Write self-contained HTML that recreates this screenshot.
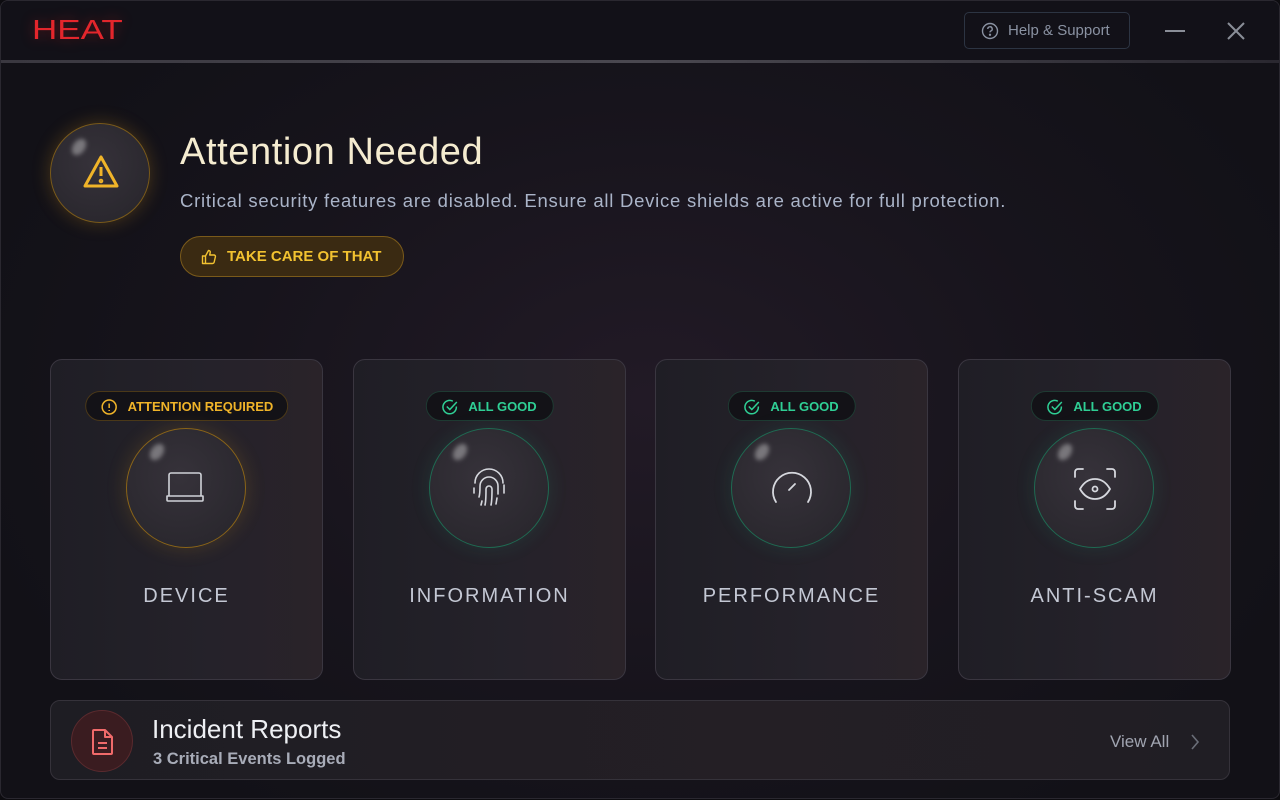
<!DOCTYPE html>
<html><head><meta charset="utf-8"><style>
*{margin:0;padding:0;box-sizing:border-box}
body{width:1280px;height:800px;overflow:hidden;background:#0d0c10;font-family:"Liberation Sans",sans-serif}
.win{position:absolute;left:0;top:0;width:1280px;height:799px;border-radius:8px;background:radial-gradient(ellipse 700px 500px at 650px 400px,#221a26 0%,#17141c 60%,#121117 100%);border:1px solid #2a2830;overflow:hidden}
.hdr{position:absolute;left:0;top:0;width:100%;height:60px;background:#121118}
.sep{position:absolute;left:0;top:59px;width:100%;height:3px;background:linear-gradient(90deg,#3a3840,#4a4850 50%,#2a2830)}
.logo{position:absolute;left:31px;top:13px;color:#e3262c;font-size:28px;font-weight:400;transform:scaleX(1.25);transform-origin:left;text-shadow:0 0 12px rgba(220,30,30,.4)}
.help{position:absolute;left:963px;top:11px;width:166px;height:37px;border:1px solid #2c3442;border-radius:5px;color:#8a92a2;font-size:15px;line-height:36px;padding-left:43px}
.help svg{position:absolute;left:16px;top:9px}
.txt{position:absolute;color:#f5ecd0}
.circ{position:absolute;border-radius:50%;background:radial-gradient(circle at 45% 40%,#36323a,#26242a)}
.shine{position:absolute;width:12px;height:18px;border-radius:50%;background:rgba(255,255,255,.35);filter:blur(2px);transform:rotate(35deg)}
.card{position:absolute;top:358px;width:273px;height:321px;border:1px solid #3a3640;border-radius:12px;background:linear-gradient(90deg,#1f1e25,#25222a 60%,#2a2329)}
.badge{position:absolute;top:31px;height:30px;border-radius:15px;background:#131217;font-weight:bold;font-size:13px;line-height:29px;left:50%;transform:translateX(-50%);white-space:nowrap}
.label{position:absolute;top:225px;width:100%;text-align:center;color:#c4c8d4;font-size:20px;letter-spacing:2px}
.big{left:75px;top:68px;width:120px;height:120px}
</style></head><body>
<div class="win">
<div class="hdr"></div><div class="sep"></div>
<div class="logo">HEAT</div>
<div class="help"><svg width="18" height="18" viewBox="0 0 18 18" fill="none" stroke="#8a92a2" stroke-width="1.4"><circle cx="9" cy="9" r="7.5"/><path d="M6.8 7a2.2 2.2 0 1 1 3 2c-.6.3-.8.7-.8 1.4"/><circle cx="9" cy="12.8" r=".5" fill="#8a92a2"/></svg>Help &amp; Support</div>
<div style="position:absolute;left:1164px;top:29px;width:20px;height:2px;background:#8a8e98"></div>
<svg style="position:absolute;left:1226px;top:21px" width="18" height="18" stroke="#8a8e98" stroke-width="2"><path d="M1 1L17 17M17 1L1 17"/></svg>

<div class="circ" style="left:49px;top:122px;width:100px;height:100px;border:1px solid #7a5a1a;box-shadow:0 0 18px rgba(230,160,30,.25)"><div class="shine" style="left:22px;top:14px"></div>
<svg style="position:absolute;left:31px;top:30px" width="38" height="36" viewBox="0 0 38 36" fill="none" stroke="#f0b429" stroke-width="3" stroke-linejoin="round"><path d="M19 3L35 32H3Z"/><path d="M19 13v9"/><circle cx="19" cy="27" r=".8" fill="#f0b429"/></svg></div>
<div class="txt" style="left:179px;top:130px;font-size:38px;letter-spacing:0.6px">Attention Needed</div>
<div class="txt" style="left:179px;top:189px;font-size:18.5px;letter-spacing:0.75px;color:#aab4c8">Critical security features are disabled. Ensure all Device shields are active for full protection.</div>
<div style="position:absolute;left:179px;top:235px;width:224px;height:41px;border-radius:21px;border:1px solid #7a5a1a;background:#3a2a12;color:#f2c230;font-weight:bold;font-size:15px;line-height:40px;padding-left:46px">TAKE CARE OF THAT
<svg style="position:absolute;left:20px;top:12px" width="16" height="16" viewBox="0 0 16 16" fill="none" stroke="#f2c230" stroke-width="1.4" stroke-linejoin="round"><path d="M1.5 7h3v7.5h-3zM4.5 7l3-5.5c1.2 0 2 .8 1.7 2L8.7 6h4.3c1 0 1.6.9 1.4 1.8l-1.2 5.2c-.2.9-.9 1.5-1.8 1.5H4.5"/></svg></div>

<div class="card" style="left:49px">
<div class="badge" style="border:1px solid #4a3818;color:#f0b429;padding:0 14px 0 42px">ATTENTION REQUIRED<svg style="position:absolute;left:15px;top:7px" width="16" height="16" fill="none" stroke="#f0b429" stroke-width="1.5"><circle cx="8" cy="8" r="7"/><path d="M8 4.5v4.5M8 11v1"/></svg></div>
<div class="circ big" style="border:1px solid #8a6418;box-shadow:0 0 20px rgba(230,160,30,.18)"><div class="shine" style="left:24px;top:14px"></div>
<svg style="position:absolute;left:38px;top:42px" width="42" height="36" fill="none" stroke="#d0d2d8" stroke-width="1.6" stroke-linejoin="round"><path d="M4 25V4a2 2 0 0 1 2-2h28a2 2 0 0 1 2 2v21M2 25h36v4a1 1 0 0 1-1 1H3a1 1 0 0 1-1-1z"/></svg></div>
<div class="label">DEVICE</div></div>

<div class="card" style="left:352px">
<div class="badge" style="border:1px solid #1e3a32;color:#2fcf95;padding:0 16px 0 42px">ALL GOOD<svg style="position:absolute;left:15px;top:7px" width="16" height="16" fill="none" stroke="#2fcf95" stroke-width="1.5"><path d="M14.5 7.5A6.7 6.7 0 1 1 11 2.2"/><path d="M5 7.5l3 3 7-7.5"/></svg></div>
<div class="circ big" style="border:1px solid #1f6a52;box-shadow:0 0 20px rgba(40,200,150,.12)"><div class="shine" style="left:24px;top:14px"></div>
<svg style="position:absolute;left:36px;top:36px" width="46" height="46" viewBox="0 0 46 46" fill="none" stroke="#d6d8de" stroke-width="1.6" stroke-linecap="round"><path d="M9 18a14 14 0 0 1 28 0"/><path d="M8 23v5M38 20v8"/><path d="M13 32c1-3 1-7 1-11a9 9 0 0 1 18 0v8"/><path d="M19 40c1-4 1-9 1-16a3 3 0 0 1 6 0c0 7 0 12-1 16"/><path d="M31 33l-1 6"/><path d="M16 36l-1 4"/></svg></div>
<div class="label">INFORMATION</div></div>

<div class="card" style="left:654px">
<div class="badge" style="border:1px solid #1e3a32;color:#2fcf95;padding:0 16px 0 42px">ALL GOOD<svg style="position:absolute;left:15px;top:7px" width="16" height="16" fill="none" stroke="#2fcf95" stroke-width="1.5"><path d="M14.5 7.5A6.7 6.7 0 1 1 11 2.2"/><path d="M5 7.5l3 3 7-7.5"/></svg></div>
<div class="circ big" style="border:1px solid #1f6a52;box-shadow:0 0 20px rgba(40,200,150,.12)"><div class="shine" style="left:24px;top:14px"></div>
<svg style="position:absolute;left:36px;top:38px" width="48" height="44" viewBox="0 0 48 44" fill="none" stroke="#d6d8de" stroke-width="1.8" stroke-linecap="round"><path d="M8 35A19 19 0 1 1 40 35"/><path d="M21 23l6-6"/></svg></div>
<div class="label">PERFORMANCE</div></div>

<div class="card" style="left:957px">
<div class="badge" style="border:1px solid #1e3a32;color:#2fcf95;padding:0 16px 0 42px">ALL GOOD<svg style="position:absolute;left:15px;top:7px" width="16" height="16" fill="none" stroke="#2fcf95" stroke-width="1.5"><path d="M14.5 7.5A6.7 6.7 0 1 1 11 2.2"/><path d="M5 7.5l3 3 7-7.5"/></svg></div>
<div class="circ big" style="border:1px solid #1f6a52;box-shadow:0 0 20px rgba(40,200,150,.12)"><div class="shine" style="left:24px;top:14px"></div>
<svg style="position:absolute;left:38px;top:38px" width="44" height="44" viewBox="0 0 44 44" fill="none" stroke="#d6d8de" stroke-width="1.8" stroke-linecap="round"><path d="M2 10V5a3 3 0 0 1 3-3h5M34 2h5a3 3 0 0 1 3 3v5M42 34v5a3 3 0 0 1-3 3h-5M10 42H5a3 3 0 0 1-3-3v-5"/><path d="M7 22c4-7 9-10 15-10s11 3 15 10c-4 7-9 10-15 10S11 29 7 22z"/><circle cx="22" cy="22" r="2.5"/></svg></div>
<div class="label">ANTI-SCAM</div></div>

<div style="position:absolute;left:49px;top:699px;width:1180px;height:80px;border:1px solid #35323a;border-radius:10px;background:linear-gradient(90deg,#1e1d23,#241f25 60%,#201e24)">
<div style="position:absolute;left:20px;top:9px;width:62px;height:62px;border-radius:50%;background:#3a1c20;border:1px solid #5a2a2e"><svg style="position:absolute;left:19px;top:17px" width="24" height="28" viewBox="0 0 24 28" fill="none" stroke="#f06a6a" stroke-width="2" stroke-linejoin="round"><path d="M3 2h11l7 7v16a1 1 0 0 1-1 1H3a1 1 0 0 1-1-1V3a1 1 0 0 1 1-1z"/><path d="M14 2v7h7M7 15h9M7 20h9"/></svg></div>
<div style="position:absolute;left:101px;top:13px;color:#eef0f4;font-size:26px">Incident Reports</div>
<div style="position:absolute;left:102px;top:49px;color:#a8acb8;font-size:16.5px;font-weight:bold">3 Critical Events Logged</div>
<div style="position:absolute;left:1059px;top:31px;color:#a0a4b0;font-size:17px">View All</div>
<svg style="position:absolute;left:1139px;top:33px" width="10" height="16" fill="none" stroke="#6a6e78" stroke-width="1.6"><path d="M2 1l6 7-6 7"/></svg>
</div>
</div>
</body></html>
